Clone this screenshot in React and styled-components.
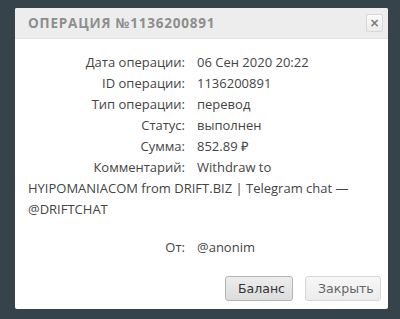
import React from 'react'
import styled, { createGlobalStyle } from 'styled-components'

const Global = createGlobalStyle`
    html, body {
        margin: 0;
        padding: 0;
        background: #36434b;
    }
`

const Page = styled.div`
    width: 400px;
    height: 319px;
    padding: 8px 12px 0 15px;
    box-sizing: border-box;
    background: #36434b;
    overflow: hidden;
`

const Modal = styled.div`
    width: 373px;
    height: 301px;
    background: #fff;
    border-radius: 2px;
    display: flex;
    flex-direction: column;
    font-family: 'Open Sans', sans-serif;
`

const Header = styled.div`
    height: 30px;
    background: #ededed;
    border-bottom: 1px solid #e3e3e3;
    display: flex;
    align-items: center;
    justify-content: space-between;
    padding: 0 5px 0 13px;
    border-radius: 2px 2px 0 0;
`

const Title = styled.div`
    font-family: 'Open Sans', sans-serif;
    font-weight: 700;
    font-size: 13.5px;
    letter-spacing: 0.8px;
    color: #8e8e8e;
`

const CloseButton = styled.div`
    width: 15px;
    height: 16px;
    border: 1px solid #d8d8d8;
    border-radius: 2px;
    background: linear-gradient(#fafafa, #ececec);
    display: flex;
    align-items: center;
    justify-content: center;
    font-family: 'DejaVu Sans', sans-serif;
    font-weight: 700;
    font-size: 12px;
    color: #777;
    line-height: 1;
`

const Body = styled.div`
    flex: 1;
    padding: 13px 13px 0 13px;
    font-size: 13px;
    line-height: 21px;
    color: #444;
`

const Row = styled.div`
    margin-top: ${p => p.gap || 0}px;
`

const Label = styled.span`
    display: inline-block;
    width: 157px;
    text-align: right;
    margin-right: 12px;
`

const Footer = styled.div`
    display: flex;
    justify-content: flex-end;
    gap: 12px;
    padding: 0 7px 8px 0;
`

const Button = styled.button`
    height: 25px;
    padding: 0 12px;
    font-family: 'DejaVu Sans', sans-serif;
    font-size: 12.5px;
    border-radius: 3px;
    border: 1px solid ${p => (p.primary ? '#b4b4b4' : '#d6d6d6')};
    background: ${p =>
        p.primary
            ? 'linear-gradient(#ededed, #dcdcdc)'
            : 'linear-gradient(#f7f7f7, #ececec)'};
    color: ${p => (p.primary ? '#333' : '#666')};
    width: ${p => p.w}px;
`

const rows = [
    ['Дата операции:', '06 Сен 2020 20:22'],
    ['ID операции:', '1136200891'],
    ['Тип операции:', 'перевод'],
    ['Статус:', 'выполнен'],
    ['Сумма:', '852.89 ₽'],
    ['Комментарий:', 'Withdraw to'],
]

export default function App() {
    return (
        <Page>
            <Global />
            <Modal>
                <Header>
                    <Title>ОПЕРАЦИЯ №1136200891</Title>
                    <CloseButton>×</CloseButton>
                </Header>
                <Body>
                    {rows.map(([label, value]) => (
                        <Row key={label}>
                            <Label>{label}</Label>
                            {value}
                        </Row>
                    ))}
                    <Row>HYIPOMANIACOM from DRIFT.BIZ | Telegram chat — @DRIFTCHAT</Row>
                    <Row gap={17}>
                        <Label>От:</Label>
                        @anonim
                    </Row>
                </Body>
                <Footer>
                    <Button primary w={68}>
                        Баланс
                    </Button>
                    <Button w={76}>Закрыть</Button>
                </Footer>
            </Modal>
        </Page>
    )
}
